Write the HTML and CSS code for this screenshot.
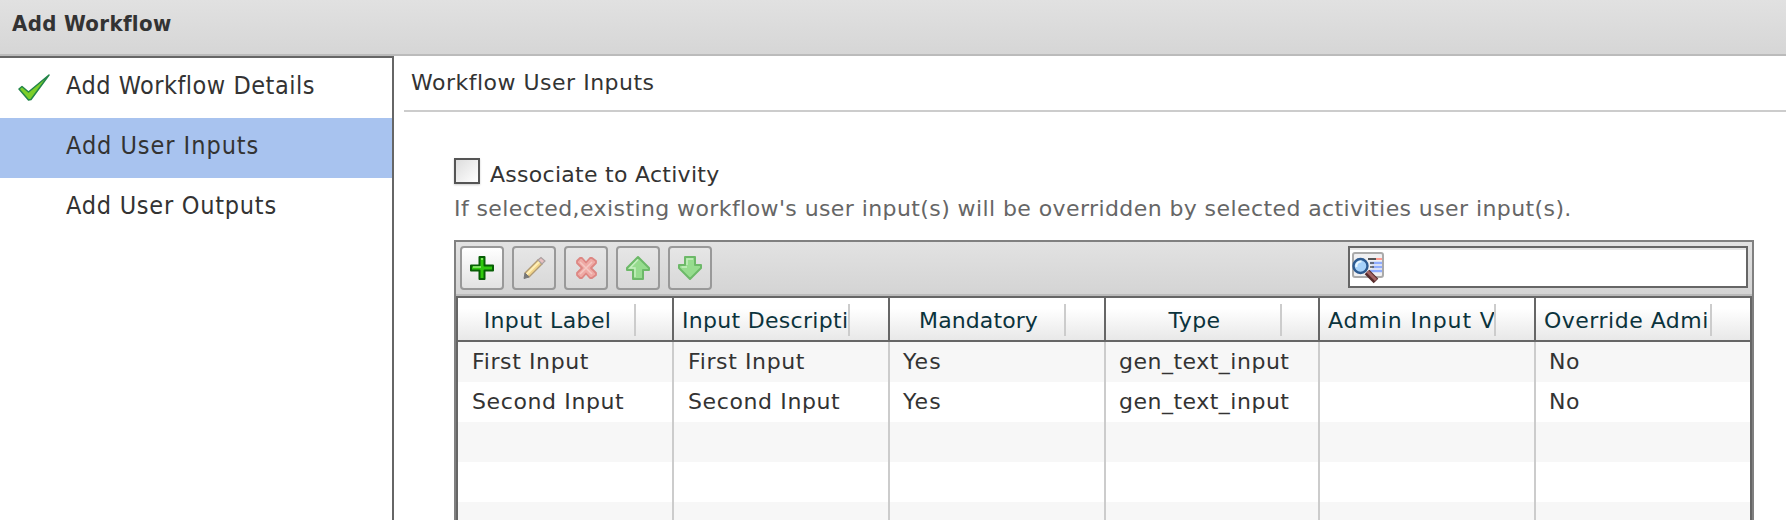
FILE: index.html
```
<!DOCTYPE html>
<html lang="en"><head><meta charset="utf-8"><title>Add Workflow</title><link rel="stylesheet" href="styles.css"></head>
<body>
<header class="titlebar"><h1 class="title">Add Workflow</h1></header>
<div class="body">
<nav class="steps">
<div class="step step-details"><span class="step-icon"><svg width="36" height="30" viewBox="0 0 36 30"><path d="M2 15 5 12.500 11.500 18 32 1 14 25.500 11.500 26Z" fill="#7ccf2a" stroke="#23854a" stroke-width="1.500" stroke-linejoin="round"/></svg></span><span>Add Workflow Details</span></div>
<div class="step step-inputs"><span class="step-icon"></span><span>Add User Inputs</span></div>
<div class="step step-outputs"><span class="step-icon"></span><span>Add User Outputs</span></div>
</nav>
<main class="panel">
<h2 class="panel-title">Workflow User Inputs</h2>
<section class="content">
<label class="check"><span class="box"></span><span class="check-label">Associate to Activity</span></label>
<p class="hint">If selected,existing workflow's user input(s) will be overridden by selected activities user input(s).</p>
<div class="grid">
<div class="toolbar">
<span class="btn btn-on"><svg width="26" height="26" viewBox="0 0 26 26"><path d="M10.500 2h5v8.500H24v5h-8.500V24h-5v-8.500H2v-5h8.500Z" fill="#2fc80d" stroke="#075e05" stroke-width="2" stroke-linejoin="round"/><path d="M12 4h2M4 12h8" stroke="#9cf07c" stroke-width="1.500"/></svg></span>
<span class="btn"><svg width="26" height="26" viewBox="0 0 26 26"><path d="M4 18 17 5l4 4L8 22Z" fill="#f2d58a" stroke="#b09a74" stroke-width="1.400"/><path d="M5.500 19.500 18.500 6.500" stroke="#fff0b8" stroke-width="1.800"/><path d="M17 5l3-2.500 4 3.500-3 3Z" fill="#e9c0c0" stroke="#aaa0a0" stroke-width="1.200"/><path d="M4 18l4 4-5 1.500Z" fill="#777" stroke="#777"/></svg></span>
<span class="btn"><svg width="26" height="26" viewBox="0 0 26 26"><path d="M4 6 7 3h2l4 4.500L17 3h2l4 3v2l-5 5 5 5v2l-4 3h-2l-4-4.500L9 23H7l-3-3v-2l5-5-5-5Z" fill="#efaaa5" stroke="#dd8783" stroke-width="1.800" stroke-linejoin="round"/><path d="M7 7l12 12M19 7 7 19" stroke="#f5c8c3" stroke-width="1.500"/></svg></span>
<span class="btn"><svg width="26" height="26" viewBox="0 0 26 26"><path d="M13 2 24 13v2h-6v9H8v-9H2v-2Z" fill="#96dc8e" stroke="#6db969" stroke-width="2" stroke-linejoin="round"/><path d="M13 4.500 5 13h5v9" fill="none" stroke="#c6efc0" stroke-width="1.500"/></svg></span>
<span class="btn"><svg width="26" height="26" viewBox="0 0 26 26"><path d="M8 2h10v8h6v3L13 24 2 13v-3h6Z" fill="#96dc8e" stroke="#6db969" stroke-width="2" stroke-linejoin="round"/><path d="M10 10V4h6M4.500 12H10" fill="none" stroke="#c6efc0" stroke-width="1.500"/></svg></span>
<span class="search"><svg width="32" height="32" viewBox="0 0 32 32"><rect x="1" y="1" width="30" height="24" rx="2" fill="#f0f0f2" stroke="#aaa" stroke-width="2"/><path d="M16 7h8" stroke="#555" stroke-width="2"/><path d="M24 7h6" stroke="#ff9c91" stroke-width="2"/><path d="M18 11h12M20 15h10M18 19h12" stroke="#8facff" stroke-width="2.500"/><path d="M18 11h4M18 15h4" stroke="#555" stroke-width="1.500"/><circle cx="8.500" cy="14" r="7" fill="#a7d2fa" stroke="#2d5b91" stroke-width="2.400"/><path d="M4.500 15a4.500 4.500 0 0 1 5-5.500" fill="none" stroke="#e9f7ff" stroke-width="2"/><path d="M15 20 24 29" stroke="#572b2b" stroke-width="6.500"/><path d="M15.500 19.500 24 28" stroke="#a26464" stroke-width="3"/></svg></span>
</div>
<div class="table">
<div class="row head">
<div class="th narrow"><span class="th-text">Input Label</span></div><div class="th clipped"><span class="th-text">Input Descripti</span></div><div class="th mandatory"><span class="th-text">Mandatory</span></div><div class="th narrow"><span class="th-text">Type</span></div><div class="th clipped admin"><span class="th-text">Admin Input Va</span></div><div class="th clipped override"><span class="th-text">Override Admi</span></div>
</div>
<div class="row odd"><div class="td">First Input</div><div class="td">First Input</div><div class="td yes">Yes</div><div class="td type">gen_text_input</div><div class="td"></div><div class="td">No</div></div>
<div class="row"><div class="td">Second Input</div><div class="td">Second Input</div><div class="td yes">Yes</div><div class="td type">gen_text_input</div><div class="td"></div><div class="td">No</div></div>
<div class="row odd"><div class="td"></div><div class="td"></div><div class="td"></div><div class="td"></div><div class="td"></div><div class="td"></div></div>
<div class="row"><div class="td"></div><div class="td"></div><div class="td"></div><div class="td"></div><div class="td"></div><div class="td"></div></div>
<div class="row odd"><div class="td"></div><div class="td"></div><div class="td"></div><div class="td"></div><div class="td"></div><div class="td"></div></div>
</div>
</div>
</section>
</main>
</div>
</body></html>
```
FILE: styles.css
```
* { box-sizing: border-box; }
body { margin: 0; width: 1786px; height: 520px; overflow: hidden; background: #fff; color: #333; font-family: "DejaVu Sans", Verdana, sans-serif; font-size: 22px; }
h1, h2, p { margin: 0; font-weight: normal; }
svg { display: block; }
.titlebar { height: 56px; padding: 8px 0 0 12px; background: linear-gradient(#e1e1e1, #d6d6d6); border-bottom: 2px solid #bbb; }
.title { font: bold 22px/32px "DejaVu Sans Condensed", "DejaVu Sans", sans-serif; letter-spacing: 0.35px; color: #333; }
.body { display: flex; height: 464px; }
.steps { width: 394px; flex: none; border-top: 2px solid #666; border-right: 2px solid #666; font: 25px/56px "DejaVu Sans Condensed", "DejaVu Sans", sans-serif; }
.step { display: flex; height: 60px; white-space: nowrap; }
.step-details { letter-spacing: 0.5px; }
.step-inputs { letter-spacing: 0.95px; background: #a8c3ef; }
.step-outputs { letter-spacing: 0.75px; }
.step-icon { width: 66px; flex: none; padding: 16px 0 0 17px; }
.panel { flex: 1; padding-left: 10px; min-width: 0; }
.panel-title { height: 56px; padding-left: 7px; border-bottom: 2px solid #ccc; font-size: 22px; line-height: 54px; letter-spacing: 0.5px; }
.content { padding: 44px 0 0 50px; }
.check { display: flex; height: 34px; align-items: flex-start; }
.box { width: 26px; height: 26px; margin-top: 2px; border: 2px solid #555; background: linear-gradient(135deg, #ddd, #fff); box-shadow: 0 1px 2px #ccc; }
.check-label { margin-left: 10px; line-height: 37px; letter-spacing: 0.28px; }
.hint { height: 50px; line-height: 37px; color: #666; white-space: nowrap; letter-spacing: 0.41px; }
.grid { width: 1300px; height: 282px; border: 2px solid #808080; border-bottom: 0; overflow: hidden; }
.toolbar { display: flex; gap: 8px; height: 54px; padding: 4px 4px 0; background: linear-gradient(#e2e2e2, #d4d4d4); border-bottom: 2px solid #bbb; }
.btn { width: 44px; height: 44px; flex: none; display: flex; align-items: center; justify-content: center; border: 2px solid #999; border-radius: 4px; background: linear-gradient(#e6e6e6, #d8d8d8); }
.btn-on { background: linear-gradient(#fff, #e2e2e2); }
.search { width: 400px; height: 42px; margin-left: auto; border: 2px solid #666; background: #fff; box-shadow: inset 0 2px #e6e6e6; padding: 4px 2px; }
.table { border: 2px solid #666; border-bottom: 0; }
.row { display: grid; grid-template-columns: 216px 216px 216px 214px 216px 214px; height: 40px; }
.odd { background: #f7f7f7; }
.head { height: 44px; border-bottom: 2px solid #666; background: linear-gradient(#fff 25%, #e8e8e8); }
.th { border-right: 2px solid #666; padding: 6px 38px 0 0; color: #0b333c; white-space: nowrap; letter-spacing: 0.4px; }
.narrow { padding-right: 36px; }
.mandatory { letter-spacing: 0.1px; }
.th-text { display: block; height: 32px; padding-left: 3px; border-right: 2px solid #ccc; line-height: 33px; text-align: center; overflow: hidden; }
.clipped { letter-spacing: 0.3px; }
.clipped .th-text { text-align: left; padding-left: 8px; }
.admin { letter-spacing: 0.9px; }
.override { letter-spacing: 0.5px; }
.td { border-right: 2px solid #ccc; padding-left: 13px; line-height: 40px; white-space: nowrap; letter-spacing: 0.62px; }
.td:first-child, .td:nth-child(2) { padding-left: 14px; }
.yes { letter-spacing: 1.1px; }
.type { letter-spacing: 0.5px; }
.th:last-child, .td:last-child { border-right: 0; }
```
